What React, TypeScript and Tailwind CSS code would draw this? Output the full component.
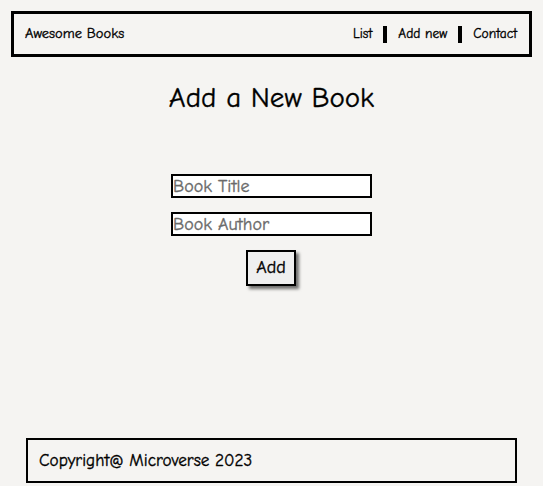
import { useState } from 'react';

const FONT = "font-['Comic_Sans_MS','Comic_Neue','Lato',sans-serif] [-webkit-text-stroke:0.35px_currentColor]";

function Header() {
  return (
    <header className="mx-[11px] mt-[11px] flex h-[46px] items-center justify-between border-[3px] border-black pl-[11px] pr-[12px]">
      <span className="text-[14.5px] leading-none text-black">Awesome Books</span>
      <nav className="flex items-center text-[13.5px] leading-none text-black">
        <a href="#list">List</a>
        <span className="mx-[11px] h-[17px] w-[4px] bg-black" />
        <a href="#add">Add new</a>
        <span className="mx-[11px] h-[17px] w-[4px] bg-black" />
        <a href="#contact">Contact</a>
      </nav>
    </header>
  );
}

export default function App() {
  const [title, setTitle] = useState('');
  const [author, setAuthor] = useState('');

  return (
    <div className={`flex h-[486px] flex-col bg-[#f5f4f2] ${FONT}`}>
      <Header />

      <main className="flex flex-1 flex-col items-center">
        <h1 className="mt-[24px] text-[29px] leading-[34px] text-black">Add a New Book</h1>

        <form
          className="mt-[59px] flex flex-col items-center gap-[14px]"
          onSubmit={(e) => e.preventDefault()}
        >
          <input
            value={title}
            onChange={(e) => setTitle(e.target.value)}
            placeholder="Book Title"
            className="h-[24px] w-[201px] border-2 border-black bg-white px-0 text-[18px] leading-none text-black outline-none placeholder:text-[#6a6a6a]"
          />
          <input
            value={author}
            onChange={(e) => setAuthor(e.target.value)}
            placeholder="Book Author"
            className="h-[24px] w-[201px] border-2 border-black bg-white px-0 text-[18px] leading-none text-black outline-none placeholder:text-[#6a6a6a]"
          />
          <button
            type="submit"
            className="-ml-[1px] h-[36px] w-[50px] border-2 border-black bg-[#efefef] text-[18px] leading-none text-black shadow-[3px_3px_3px_rgba(0,0,0,0.55)]"
          >
            Add
          </button>
        </form>
      </main>

      <footer className="mx-[26px] mb-[3px] flex h-[45px] items-center border-2 border-black px-[11px]">
        <span className="text-[17.2px] text-black">Copyright@ Microverse 2023</span>
      </footer>
    </div>
  );
}
